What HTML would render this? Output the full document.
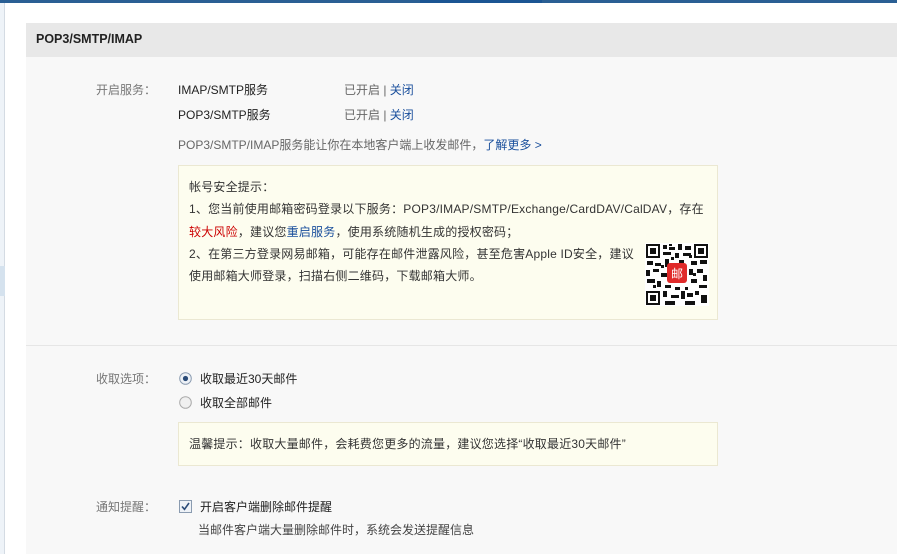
<!DOCTYPE html>
<html><head><meta charset="utf-8"><style>
*{margin:0;padding:0;box-sizing:border-box}
body{width:897px;height:554px;overflow:hidden;background:#fff;font-family:"Liberation Sans","Noto Sans CJK SC",sans-serif;font-size:12px;color:#333;position:relative}
.abs{position:absolute;white-space:nowrap}
.lbl{color:#777;text-align:right;width:100px;left:56px}
a{color:#1a4f9c;text-decoration:none}
</style></head><body>
<div class="abs" style="left:0;top:0;width:897px;height:3px;background:#2a5f94"></div>
<div class="abs" style="left:420px;top:0;width:122px;height:3px;background:#1b5593"></div>
<div class="abs" style="left:0;top:3px;width:5px;height:551px;background:#eef3f8;border-right:1px solid #d4dbe3"></div>
<div class="abs" style="left:0;top:266px;width:5px;height:30px;background:#d5e2ee"></div>
<div class="abs" style="left:26px;top:23px;width:871px;height:531px;background:#f8f8f8"></div>
<div class="abs" style="left:26px;top:23px;width:871px;height:34px;background:#e8e8e8"></div>
<div class="abs" style="left:36px;top:32px;font-weight:bold;font-size:12.5px;color:#222">POP3/SMTP/IMAP</div>

<div class="abs lbl" style="top:81px">开启服务：</div>
<div class="abs" style="left:178px;top:81px;color:#222">IMAP/SMTP服务</div>
<div class="abs" style="left:344px;top:81px;color:#666">已开启 | <a>关闭</a></div>
<div class="abs" style="left:178px;top:106px;color:#222">POP3/SMTP服务</div>
<div class="abs" style="left:344px;top:106px;color:#666">已开启 | <a>关闭</a></div>
<div class="abs" style="left:178px;top:136px;color:#666">POP3/SMTP/IMAP服务能让你在本地客户端上收发邮件，<a>了解更多 &gt;</a></div>

<div class="abs" style="left:178px;top:165px;width:540px;height:155px;background:#fdfdef;border:1px solid #ebe8d2"></div>
<div class="abs" style="left:189px;top:176px;line-height:22.3px;color:#333;letter-spacing:0.2px">帐号安全提示：<br>1、您当前使用邮箱密码登录以下服务：POP3/IMAP/SMTP/Exchange/CardDAV/CalDAV，存在<br><span style="color:#c00">较大风险</span>，建议您<a>重启服务</a>，使用系统随机生成的授权密码；<br>2、在第三方登录网易邮箱，可能存在邮件泄露风险，甚至危害Apple ID安全，建议<br>使用邮箱大师登录，扫描右侧二维码，下载邮箱大师。</div>
<svg class="abs" style="left:645px;top:243px" width="64" height="63" viewBox="0 0 64 63">
<rect width="64" height="63" fill="#fff"/>
<g fill="#111">
<rect x="1" y="1" width="14" height="14"/><rect x="49" y="1" width="14" height="14"/><rect x="1" y="48" width="14" height="14"/>
</g>
<g fill="#fff"><rect x="3" y="3" width="10" height="10"/><rect x="51" y="3" width="10" height="10"/><rect x="3" y="50" width="10" height="10"/></g>
<g fill="#111"><rect x="5" y="5" width="6" height="6"/><rect x="53" y="5" width="6" height="6"/><rect x="5" y="52" width="6" height="6"/>
<path d="M18 2h4v4h-4zM24 4h6v3h-6zM33 1h4v6h-4zM40 3h6v4h-6zM18 9h8v3h-8zM30 10h4v5h-4zM38 10h8v3h-8zM2 18h6v4h-6zM10 20h6v3h-6zM20 16h4v8h-4zM46 18h6v4h-6zM55 17h7v4h-7zM1 27h4v6h-4zM8 26h6v3h-6zM16 30h6v4h-6zM44 26h4v6h-4zM52 26h6v4h-6zM58 32h4v6h-4zM2 36h8v4h-8zM12 38h4v6h-4zM20 42h6v3h-6zM46 36h6v4h-6zM54 42h8v3h-8zM18 48h4v6h-4zM26 52h8v3h-8zM36 48h4v8h-4zM42 50h6v4h-6zM50 48h4v4h-4zM56 52h6v8h-6zM20 58h10v4h-10zM40 58h10v4h-10zM26 14h3v3h-3zM34 17h5v3h-5zM16 22h3v3h-3zM48 30h3v3h-3zM30 44h5v3h-5zM40 44h3v3h-3zM8 42h3v3h-3zM24 1h3v2h-3zM44 12h3v3h-3z"/></g>
<rect x="22" y="20" width="20" height="20" rx="3" fill="#e02a2a"/>
<text x="32" y="35" font-size="12" fill="#fff" text-anchor="middle" font-family="Noto Sans CJK SC">邮</text>
</svg>

<div class="abs" style="left:26px;top:345px;width:871px;height:1px;background:#e6e6e6"></div>

<div class="abs lbl" style="top:370px">收取选项：</div>
<svg class="abs" style="left:179px;top:372px" width="13" height="13"><circle cx="6.5" cy="6.5" r="5.8" fill="#eef2f7" stroke="#8a9bb0"/><circle cx="6.5" cy="6.5" r="2.6" fill="#2a4b78"/></svg>
<div class="abs" style="left:200px;top:370px;color:#222">收取最近30天邮件</div>
<svg class="abs" style="left:179px;top:396px" width="13" height="13"><circle cx="6.5" cy="6.5" r="5.8" fill="#f0f0f0" stroke="#aaa"/></svg>
<div class="abs" style="left:200px;top:394px;color:#222">收取全部邮件</div>
<div class="abs" style="left:178px;top:422px;width:540px;height:44px;background:#fdfdef;border:1px solid #ebe8d2"></div>
<div class="abs" style="left:189px;top:435px;color:#333;letter-spacing:0.2px">温馨提示：收取大量邮件，会耗费您更多的流量，建议您选择“收取最近30天邮件”</div>

<div class="abs lbl" style="top:498px">通知提醒：</div>
<svg class="abs" style="left:179px;top:500px" width="13" height="13"><rect x="0.5" y="0.5" width="12" height="12" fill="#eef2f7" stroke="#8a9bb0"/><path d="M3 6.5l2.5 2.8L10 3" fill="none" stroke="#2a4b78" stroke-width="1.6"/></svg>
<div class="abs" style="left:200px;top:498px;color:#222">开启客户端删除邮件提醒</div>
<div class="abs" style="left:198px;top:521px;color:#444">当邮件客户端大量删除邮件时，系统会发送提醒信息</div>
</body></html>
